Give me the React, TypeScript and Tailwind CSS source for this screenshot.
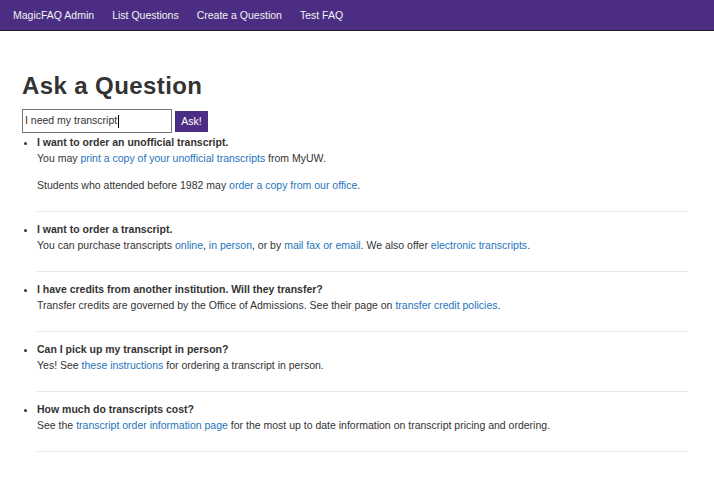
import React from "react";

const A = ({ children }: { children: React.ReactNode }) => (
  <a href="#" className="text-[#1f74bb] no-underline">
    {children}
  </a>
);

type Item = { title: string; paras: React.ReactNode[] };

const items: Item[] = [
  {
    title: "I want to order an unofficial transcript.",
    paras: [
      <>
        You may <A>print a copy of your unofficial transcripts</A> from MyUW.
      </>,
      <>
        Students who attended before 1982 may <A>order a copy from our office</A>.
      </>,
    ],
  },
  {
    title: "I want to order a transcript.",
    paras: [
      <>
        You can purchase transcripts <A>online</A>, <A>in person</A>, or by <A>mail fax or email</A>. We also
        offer <A>electronic transcripts</A>.
      </>,
    ],
  },
  {
    title: "I have credits from another institution. Will they transfer?",
    paras: [
      <>
        Transfer credits are governed by the Office of Admissions. See their page on{" "}
        <A>transfer credit policies</A>.
      </>,
    ],
  },
  {
    title: "Can I pick up my transcript in person?",
    paras: [
      <>
        Yes! See <A>these instructions</A> for ordering a transcript in person.
      </>,
    ],
  },
  {
    title: "How much do transcripts cost?",
    paras: [
      <>
        See the <A>transcript order information page</A> for the most up to date information on transcript pricing
        and ordering.
      </>,
    ],
  },
];

export default function App() {
  return (
    <div className="min-h-[482px] bg-white font-['Liberation_Sans',Arial,sans-serif] text-[#333]">
      <nav className="flex h-[31px] items-center gap-[18px] border-b border-[#1c1c1c] bg-[#4b2e83] pb-px pl-[13px] text-[10.5px] leading-[12px] text-[#f2f2f2]">
        <a href="#">MagicFAQ Admin</a>
        <a href="#">List Questions</a>
        <a href="#">Create a Question</a>
        <a href="#">Test FAQ</a>
      </nav>
      <main className="pl-[22px] pr-[26px]">
        <h1 className="mt-[41px] text-[24px] font-bold leading-[28px] tracking-[0.4px] text-[#333]">
          Ask a Question
        </h1>
        <form className="mt-[9px] flex items-center gap-[3px]" onSubmit={(e) => e.preventDefault()}>
          <div
            role="textbox"
            className="flex h-[24px] w-[150px] items-center border border-[#767676] bg-white pl-[2px] text-[10.5px] text-[#333]"
          >
            <span>I need my transcript</span>
            <span className="ml-px inline-block h-[13px] w-px bg-black" />
          </div>
          <button
            type="submit"
            className="h-[21px] w-[33px] bg-[#4b2e83] text-[10.5px] leading-[21px] text-white"
          >
            Ask!
          </button>
        </form>
        <ul className="mt-[1px] list-disc pl-[15px] text-[10.5px] leading-[16px]">
          {items.map((it, i) => (
            <li key={i}>
              <div className={i === 0 ? "" : "mt-[9px]"}>
                <strong className="font-bold">{it.title}</strong>
              </div>
              {it.paras.map((p, j) => (
                <p key={j} className={j === 0 ? "" : "mt-[11px]"}>
                  {p}
                </p>
              ))}
              <hr className="mt-[18px] border-t border-[#e6e6e6]" />
            </li>
          ))}
        </ul>
      </main>
    </div>
  );
}
